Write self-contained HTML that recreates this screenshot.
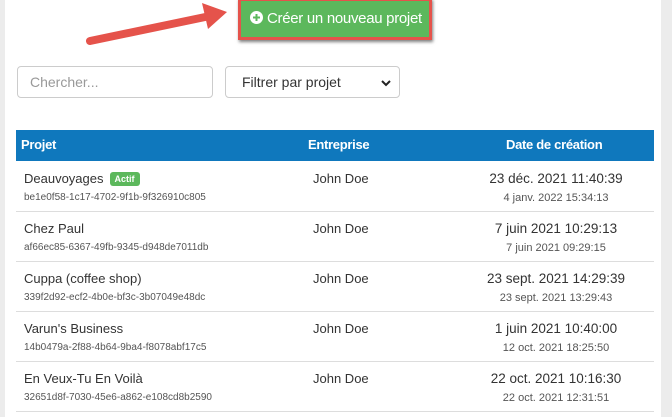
<!DOCTYPE html>
<html><head><style>
body{margin:0;width:672px;height:417px;background:#ececec;font-family:"Liberation Sans",sans-serif;overflow:hidden;position:relative}
.panel{position:absolute;left:5px;top:0;width:656px;height:417px;background:#fff}
.btnwrap{position:absolute;left:238px;top:-2px;width:188px;height:36px;border:3px solid #e5534b;box-shadow:1px 2px 3px rgba(0,0,0,.5);background:#5cb85c}
.btn{position:absolute;left:250px;top:7px;color:#fff;font-size:15px;line-height:24px;letter-spacing:-0.3px;white-space:nowrap}
.inp{position:absolute;top:66px;height:32px;border:1px solid #ccc;border-radius:4px;box-sizing:border-box;font-size:14px;line-height:30px}
.th{position:absolute;left:16px;top:130px;width:638px;height:31px;background:#0f78bd;color:#fff;font-weight:bold;font-size:13px;line-height:29px;letter-spacing:-0.3px}
.row{position:absolute;left:16px;width:638px;height:50px;border-bottom:1px solid #ddd;font-size:13px;color:#333}
.n{position:absolute;left:8px;top:10px}
.id{position:absolute;left:8px;top:31px;font-size:10px;color:#555}
.e{position:absolute;left:297px;top:10px}
.d{position:absolute;left:440px;width:200px;top:10px;text-align:center;font-size:13.5px}
.d2{position:absolute;left:440px;width:200px;top:31px;font-size:11px;color:#555;text-align:center}
.badge{display:inline-block;background:#5cb85c;color:#fff;font-size:9px;font-weight:bold;padding:2px 5px;border-radius:3px;margin-left:6px;vertical-align:1px}
</style></head><body>
<div class="panel"></div>
<svg style="position:absolute;left:0;top:0" width="672" height="60"><line x1="90" y1="41" x2="210" y2="16" stroke="#e5534b" stroke-width="8" stroke-linecap="round"/><polygon points="227,12 202,3 208,29" fill="#e5534b"/></svg>
<div class="btnwrap"></div>
<div class="btn"><svg width="13" height="13" style="vertical-align:-1px;margin-right:4px"><circle cx="6.5" cy="6.5" r="6.5" fill="#fff"/><path d="M6.5 3v7M3 6.5h7" stroke="#5cb85c" stroke-width="2"/></svg>Créer un nouveau projet</div>
<div class="inp" style="left:17px;width:196px;padding-left:12px;color:#999">Chercher...</div>
<div class="inp" style="left:225px;width:175px;padding-left:16px;color:#333">Filtrer par projet<svg width="10" height="8" style="position:absolute;right:8px;top:12px"><path d="M1 2l4 4 4-4" stroke="#222" stroke-width="2" fill="none"/></svg></div>
<div class="th"><span style="position:absolute;left:5px">Projet</span><span style="position:absolute;left:292px">Entreprise</span><span style="position:absolute;left:490px">Date de création</span></div>
<div class="row" style="top:161px"><div class="n">Deauvoyages<span class="badge">Actif</span></div><div class="id">be1e0f58-1c17-4702-9f1b-9f326910c805</div><div class="e">John Doe</div><div class="d">23 déc. 2021 11:40:39</div><div class="d2">4 janv. 2022 15:34:13</div></div>
<div class="row" style="top:211px"><div class="n">Chez Paul</div><div class="id">af66ec85-6367-49fb-9345-d948de7011db</div><div class="e">John Doe</div><div class="d">7 juin 2021 10:29:13</div><div class="d2">7 juin 2021 09:29:15</div></div>
<div class="row" style="top:261px"><div class="n">Cuppa (coffee shop)</div><div class="id">339f2d92-ecf2-4b0e-bf3c-3b07049e48dc</div><div class="e">John Doe</div><div class="d">23 sept. 2021 14:29:39</div><div class="d2">23 sept. 2021 13:29:43</div></div>
<div class="row" style="top:311px"><div class="n">Varun's Business</div><div class="id">14b0479a-2f88-4b64-9ba4-f8078abf17c5</div><div class="e">John Doe</div><div class="d">1 juin 2021 10:40:00</div><div class="d2">12 oct. 2021 18:25:50</div></div>
<div class="row" style="top:361px"><div class="n">En Veux-Tu En Voilà</div><div class="id">32651d8f-7030-45e6-a862-e108cd8b2590</div><div class="e">John Doe</div><div class="d">22 oct. 2021 10:16:30</div><div class="d2">22 oct. 2021 12:31:51</div></div>
</body></html>
